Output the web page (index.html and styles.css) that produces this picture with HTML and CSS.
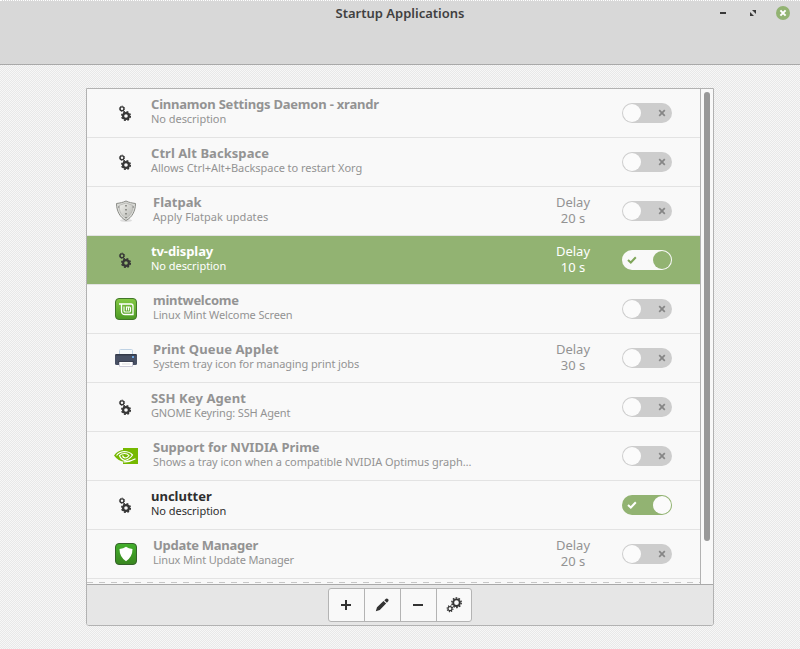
FILE: index.html
```html
<!DOCTYPE html>
<html lang="en">
<head>
<meta charset="utf-8">
<title>Startup Applications</title>
<link rel="stylesheet" href="styles.css">
</head>
<body>
<svg class="defs" width="0" height="0">
  <symbol id="gears" viewBox="0 0 24 24">
    <circle cx="8" cy="7.700" r="1.900" fill="none" stroke="currentColor" stroke-width="1.300"/>
    <circle cx="8" cy="7.700" r="2.600" fill="none" stroke="currentColor" stroke-width="1" stroke-dasharray="1.040 1"/>
    <circle cx="12" cy="15" r="2.900" fill="none" stroke="currentColor" stroke-width="2.200"/>
    <circle cx="12" cy="15" r="4.300" fill="none" stroke="currentColor" stroke-width="1.500" stroke-dasharray="1.900 1.480"/>
  </symbol>
  <symbol id="x" viewBox="0 0 8 8"><path d="M1.2 1.2 6.8 6.8M6.8 1.2 1.2 6.8" stroke="currentColor" stroke-width="1.7"/></symbol>
  <symbol id="check" viewBox="0 0 10 8"><path d="M1 4 3.8 6.5 8.8 1.2" fill="none" stroke="currentColor" stroke-width="2"/></symbol>
</svg>
<header class="titlebar">
  <h1>Startup Applications</h1>
  <div class="controls">
    <svg width="8" height="16"><path d="M1 8h6" stroke="#3a3a3a" stroke-width="2"/></svg>
    <svg width="8" height="16"><path d="M3 5h4v4zM1 7v4h4z" fill="#3a3a3a"/></svg>
    <svg width="14" height="14"><circle cx="7" cy="7" r="7" fill="#92b372"/><path d="M4.4 4.4l5.2 5.2M9.6 4.4 4.4 9.6" stroke="#fff" stroke-width="2"/></svg>
  </div>
</header>
<main class="panel">
  <div class="scroll">
    <ul class="list">
      <li class="row xrandr"><svg class="icon"><use href="#gears"/></svg><div class="text"><b>Cinnamon Settings Daemon - xrandr</b><p>No description</p></div><span class="switch"><i></i><svg class="mark"><use href="#x"/></svg></span></li>
      <li class="row ctrl"><svg class="icon"><use href="#gears"/></svg><div class="text"><b>Ctrl Alt Backspace</b><p>Allows Ctrl+Alt+Backspace to restart Xorg</p></div><span class="switch"><i></i><svg class="mark"><use href="#x"/></svg></span></li>
      <li class="row wide flatpak"><svg class="icon" viewBox="0 0 24 24"><defs><linearGradient id="steel" x2="1" y2="1"><stop stop-color="#f2f2ee"/><stop offset="1" stop-color="#b4b5b0"/></linearGradient></defs><ellipse cx="12" cy="21.500" rx="6" ry="1.500" fill="#ddd"/><path d="M12 2C9 3.500 6 4 2.500 4.500 2.500 12 6 18.500 12 21.500 18 18.500 21.500 12 21.500 4.500 18 4 15 3.500 12 2Z" fill="#dcddd9" stroke="#8b8c87"/><path d="M12 4 5 6.500C5 13 8 16.500 12 19.500 16 16.500 19 13 19 6.500Z" fill="url(#steel)" stroke="#b2b3ae" stroke-width=".8"/><path d="M12 6v13" stroke="#777873" stroke-width="1.500" stroke-dasharray="1.500 2.500"/><path d="M4 8h1.500M18.500 8H20" stroke="#777"/></svg><div class="text"><b>Flatpak</b><p>Apply Flatpak updates</p></div><div class="delay"><span>Delay</span><span>20 s</span></div><span class="switch"><i></i><svg class="mark"><use href="#x"/></svg></span></li>
      <li class="row selected tv"><svg class="icon"><use href="#gears"/></svg><div class="text"><b>tv-display</b><p>No description</p></div><div class="delay"><span>Delay</span><span>10 s</span></div><span class="switch on"><svg class="mark"><use href="#check"/></svg><i></i></span></li>
      <li class="row wide welcome"><svg class="icon" viewBox="0 0 24 24"><defs><linearGradient id="mint" x2="0" y2="1"><stop stop-color="#84c944"/><stop offset="1" stop-color="#4c9a24"/></linearGradient></defs><rect x="1.500" y="1.500" width="21" height="21" rx="3.500" fill="url(#mint)" stroke="#41762a"/><path d="M5 7H17q2 0 2 2v8.500H11q-3.500 0-3.500-3.500V7" fill="none" stroke="#fff" stroke-width="1.300"/><path d="M10 9.500V14q0 1 1 1h4.500q1 0 1-1v-3q0-1-1-1H12.500v3.500M14.500 10.500v3" fill="none" stroke="#fff" stroke-width="1.100"/></svg><div class="text"><b>mintwelcome</b><p>Linux Mint Welcome Screen</p></div><span class="switch"><i></i><svg class="mark"><use href="#x"/></svg></span></li>
      <li class="row wide print"><svg class="icon" viewBox="0 0 24 24"><rect x="5.500" y="3.500" width="13" height="9" rx="1" fill="#f7f9fb" stroke="#bfd2e4"/><rect x="1" y="8" width="22" height="11" rx="1.500" fill="#485064"/><path d="M1 9.500q0-1.500 1.500-1.500h19q1.500 0 1.500 1.500" fill="#343a49"/><rect x="18" y="10" width="2" height="2" fill="#6ba5e0"/><path d="M4 16h16" stroke="#303541"/><path d="M5.500 16v4.500h13V16" fill="#fff" stroke="#cccbd8"/><path d="M8 18h8" stroke="#ddd"/></svg><div class="text"><b>Print Queue Applet</b><p>System tray icon for managing print jobs</p></div><div class="delay"><span>Delay</span><span>30 s</span></div><span class="switch"><i></i><svg class="mark"><use href="#x"/></svg></span></li>
      <li class="row ssh"><svg class="icon"><use href="#gears"/></svg><div class="text"><b>SSH Key Agent</b><p>GNOME Keyring: SSH Agent</p></div><span class="switch"><i></i><svg class="mark"><use href="#x"/></svg></span></li>
      <li class="row wide nvidia"><svg class="icon" viewBox="0 0 24 24"><path d="M9 4h15v16H9z" fill="#76b900"/><path d="M0 11.500Q4 6 10 6q7 0 10 4.500Q17 17 11 18 4 17 0 11.500Z" fill="#76b900"/><path d="M2.500 11.500Q5 8 10 7.500q5.500 0 8.500 3.500-3 4.500-7.500 5.500-4-1-5.500-5Q7 9.500 10.500 9.500q3 0 4.500 2-1.500 2.500-4 2.500-2-.5-2.500-2.500M9.500 17.800q6 .5 12-3" fill="none" stroke="#fff" stroke-width="1.200"/></svg><div class="text"><b>Support for NVIDIA Prime</b><p>Shows a tray icon when a compatible NVIDIA Optimus graph…</p></div><span class="switch"><i></i><svg class="mark"><use href="#x"/></svg></span></li>
      <li class="row enabled unclutter"><svg class="icon"><use href="#gears"/></svg><div class="text"><b>unclutter</b><p>No description</p></div><span class="switch on"><svg class="mark"><use href="#check"/></svg><i></i></span></li>
      <li class="row wide update"><svg class="icon" viewBox="0 0 24 24"><defs><linearGradient id="leaf" x2="0" y2="1"><stop stop-color="#43b02c"/><stop offset="1" stop-color="#39861f"/></linearGradient></defs><rect x="1.500" y="1.500" width="21" height="21" rx="3.500" fill="url(#leaf)" stroke="#35622b"/><path d="M12 4.800Q9.500 6.500 5.500 7 5.500 15 12 19.200 18.500 15 18.500 7 14.500 6.500 12 4.800Z" fill="#fff"/></svg><div class="text"><b>Update Manager</b><p>Linux Mint Update Manager</p></div><div class="delay"><span>Delay</span><span>20 s</span></div><span class="switch"><i></i><svg class="mark"><use href="#x"/></svg></span></li>
    </ul>
    <div class="track"><div class="thumb"></div></div>
  </div>
  <footer class="actions">
    <div class="buttons">
      <button aria-label="Add"><svg viewBox="0 0 16 16"><path d="M8 3v10M3 8h10" stroke="currentColor" stroke-width="2"/></svg></button>
      <button aria-label="Edit"><svg viewBox="0 0 16 16"><path d="M1.800 14.200 3 10.200 9.500 4l2.600 2.600-6.300 6.300zM10.300 3.200 12 1.700q1-.6 2 .4t.4 2L12.900 5.800z" fill="currentColor"/></svg></button>
      <button aria-label="Remove"><svg viewBox="0 0 16 16"><path d="M3 8h10" stroke="currentColor" stroke-width="2"/></svg></button>
      <button aria-label="Run"><svg viewBox="0 0 16 16"><g fill="none" stroke="currentColor"><circle cx="10.500" cy="5.700" r="3.300" stroke-width="1.900"/><circle cx="10.500" cy="5.700" r="4.700" stroke-width="1.500" stroke-dasharray="1.700 1.250"/><circle cx="4" cy="11.700" r="2" stroke-width="1.200"/><circle cx="4" cy="11.700" r="2.900" stroke-width="1.200" stroke-dasharray="1.100 1.170"/></g></svg></button>
    </div>
  </footer>
</main>
</body>
</html>
```
FILE: styles.css
```css
* { box-sizing: border-box; margin: 0; padding: 0; }
body {
  width: 800px; height: 649px; overflow: hidden;
  font-family: "Noto Sans", "Open Sans", sans-serif;
  background: repeating-conic-gradient(#e8e8e8 0 25%, #f7f7f7 0 50%) 0 0 / 2px 2px;
}
.defs { position: absolute; }
.titlebar {
  height: 65px; position: relative;
  background: #d8d8d8; border-top: 1px dotted #fff; border-bottom: 1px solid #a9a9a9;
}
h1 { text-align: center; font-size: 13px; line-height: 18px; padding-top: 3px; font-weight: 600; color: #404040; }
.controls { position: absolute; top: 4px; right: 10px; display: flex; gap: 22px; align-items: center; }
.controls svg:last-child { margin-left: -3px; }
.panel { width: 628px; height: 538px; margin: 23px 0 0 86px; border: 1px solid #b2b2b2; border-radius: 0 0 3px 3px; overflow: hidden; background: #f9f9f9; }
.scroll { display: flex; height: 495px; overflow: hidden; }
.list {
  width: 613px; list-style: none;
  background: repeating-linear-gradient(90deg, #c6c6c6 0 6px, transparent 6px 12px) 0 493px / 100% 1px no-repeat;
}
.row { height: 49px; display: flex; align-items: flex-start; padding: 0 28px; border-bottom: 1px solid #e3e3e3; color: #939393; }
.icon { width: 24px; height: 24px; margin: 12px 13px 0 -1px; color: #363636; flex: none; }
.wide .icon { margin-right: 15px; }
.text { padding-top: 6px; white-space: nowrap; }
.text b { display: block; font-size: 13px; line-height: 18px; }
.text p { font-size: 11px; line-height: 13px; margin-top: -1px; letter-spacing: -0.04px; }
.xrandr b { letter-spacing: -0.21px; }
.ctrl b { letter-spacing: 0.05px; }
.ssh b, .print b { letter-spacing: 0.1px; }
.tv b { letter-spacing: -0.1px; }
.welcome b, .update b { letter-spacing: -0.28px; }
.flatpak p { letter-spacing: 0.05px; }
.welcome p { letter-spacing: -0.12px; }
.print p { letter-spacing: -0.1px; }
.ssh p, .update p { letter-spacing: -0.15px; }
.delay { margin-left: auto; width: 60px; padding-top: 7px; text-align: center; font-size: 13px; line-height: 16px; }
.delay span { display: block; }
.switch { width: 50px; height: 20px; margin: 14px 0 0 auto; border-radius: 10px; background: #cdcdcd; display: flex; align-items: center; flex: none; }
.delay + .switch { margin-left: 19px; }
.switch i { width: 18px; height: 18px; margin: 0 1px; border-radius: 50%; background: #fbfbfb; }
.mark { width: 8px; height: 8px; margin-left: 16px; color: #858585; }
.on { background: #92b372; }
.on .mark { width: 10px; margin-left: 5px; color: #fff; }
.on i { margin-left: 16px; }
.selected { background: #92b372; color: #fff; }
.selected .switch { background: #f9f9f9; }
.selected i { background: #92b372; }
.selected .mark { color: #7fa65a; }
.enabled { color: #2e2e2e; }
.track { width: 13px; padding: 3px; border-left: 1px solid #b2b2b2; }
.thumb { width: 6px; height: 449px; border-radius: 3px; background: #989898; }
.actions { height: 41px; border-top: 1px solid #a9a9a9; background: #e6e6e6; display: flex; justify-content: center; padding-top: 3px; }
.buttons { display: flex; width: 144px; height: 34px; border: 1px solid #b4b4b4; border-radius: 3px; background: #f9f9f9; }
button { width: 36px; border: 0; border-left: 1px solid #b4b4b4; padding-right: 1px; background: none; display: grid; place-items: center; color: #333; }
button:first-child { width: 35px; border-left: 0; }
button:last-child { width: 35px; padding-right: 0; }
button svg { width: 16px; height: 16px; }
```
